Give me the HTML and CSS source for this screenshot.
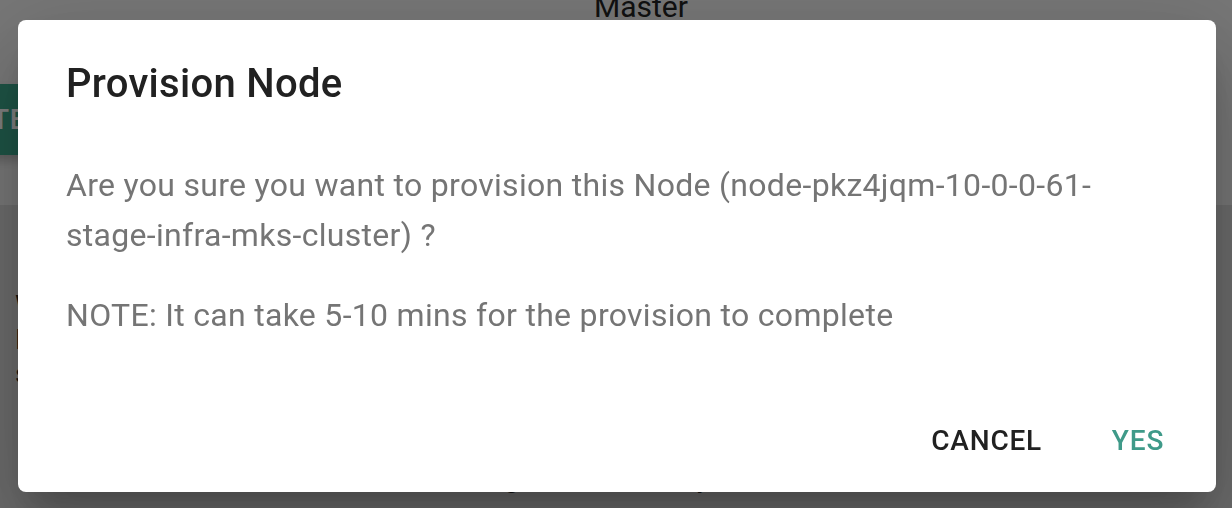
FILE: index.html
```html
<!DOCTYPE html>
<html lang="en">
<head>
    <meta charset="UTF-8">
    <meta name="viewport" content="width=device-width, initial-scale=1.0">
    <title>Master - Nodes</title>
    <link rel="stylesheet" href="styles.css">
</head>
<body>
    <div class="page">
        <header class="topbar">
            <div class="topbar-title">Master</div>
            <div class="toolbar">
                <button class="btn-primary">TEST</button>
            </div>
        </header>

        <section class="details">
            <p>Worker nodes</p>
            <p>Disk usage</p>
            <p>status</p>
            <p class="details-footer">Draining the cluster to yard, then reboot.</p>
        </section>
    </div>

    <div class="backdrop">
        <div class="dialog" role="dialog" aria-labelledby="dialog-title">
            <h2 class="dialog-title" id="dialog-title">Provision Node</h2>
            <div class="dialog-content">
                <p>Are you sure you want to provision this Node (node-pkz4jqm-10-0-0-61-stage-infra-mks-cluster) ?</p>
                <p>NOTE: It can take 5-10 mins for the provision to complete</p>
            </div>
            <div class="dialog-actions">
                <button class="btn-text">Cancel</button>
                <button class="btn-text btn-confirm">Yes</button>
            </div>
        </div>
    </div>
</body>
</html>
```

FILE: styles.css
```css
* {
    box-sizing: border-box;
}
body {
    margin: 0;
    height: 508px;
    overflow: hidden;
    font-family: Roboto, "Helvetica Neue", Arial, sans-serif;
    background-color: #d8d8d8;
}
.topbar {
    display: flow-root;
    height: 205px;
    background: #efefef;
}
.topbar-title {
    margin-top: -8px;
    padding-left: 50px;
    text-align: center;
    font-size: 30px;
    line-height: 30px;
    color: #222;
}
.toolbar {
    margin-top: 62px;
    margin-left: -40px;
}
.btn-primary {
    font-family: inherit;
    font-size: 28px;
    font-weight: 500;
    line-height: 49px;
    letter-spacing: 0.8px;
    padding: 11px 32px;
    border: 0;
    border-radius: 8px;
    background: #3ca88c;
    color: white;
    box-shadow: 0 6px 10px rgba(0,0,0,0.2);
}
.details {
    padding: 84px 0 0 15px;
    font-size: 28px;
    line-height: 34px;
    color: #222;
}
.details p {
    margin: 0;
}
.details .details-footer {
    margin: 70px 0 0 402px;
}

/* dialog */
.backdrop {
    position: fixed;
    inset: 0;
    display: flex;
    align-items: flex-start;
    padding: 20px 0 0 18px;
    background: rgba(0,0,0,0.5);
}
.dialog {
    width: 1198px;
    background: white;
    border-radius: 8px;
    box-shadow: 0 22px 30px -14px rgba(0,0,0,0.2),
                0 48px 76px 6px rgba(0,0,0,0.14),
                0 18px 92px 16px rgba(0,0,0,0.12);
}
.dialog-title {
    margin: 0;
    padding: 32px 48px;
    font-size: 40px;
    font-weight: 500;
    line-height: 64px;
    letter-spacing: 0.3px;
    color: #212121;
}
.dialog-content {
    padding: 12px 48px 48px;
}
.dialog-content p {
    margin: 0 0 30px;
    font-size: 32px;
    line-height: 50px;
    letter-spacing: 0.3px;
    color: #757575;
}
.dialog-content p:last-child {
    margin-bottom: 0;
}
.dialog-actions {
    display: flex;
    justify-content: flex-end;
    gap: 16px;
    padding: 16px 14px 15px 16px;
}
.btn-text {
    min-width: 128px;
    padding: 12px 16px;
    font-family: inherit;
    font-size: 28px;
    font-weight: 500;
    line-height: 49px;
    letter-spacing: 0.8px;
    text-transform: uppercase;
    background: none;
    border: 0;
    border-radius: 8px;
    color: #212121;
}
.btn-confirm {
    color: #3f9a89;
}
```
